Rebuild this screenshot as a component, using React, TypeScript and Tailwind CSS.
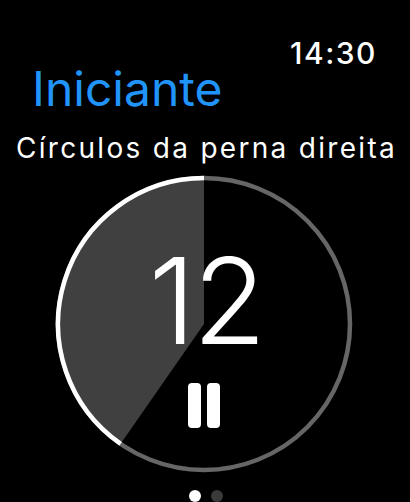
import React from "react";

const font = { fontFamily: "Inter, 'Noto Sans', sans-serif" };

function ProgressRing({ fraction }: { fraction: number }) {
  // angle measured counter-clockwise from 12 o'clock
  const r = 146;
  const a = fraction * 2 * Math.PI;
  const ex = 150 - r * Math.sin(a);
  const ey = 150 - r * Math.cos(a);
  const large = fraction > 0.5 ? 1 : 0;

  return (
    <svg width="300" height="300" viewBox="0 0 300 300" className="block">
      <path
        d={`M150 150 L150 ${150 - r} A${r} ${r} 0 ${large} 0 ${ex} ${ey} Z`}
        fill="#404040"
      />
      <circle cx="150" cy="150" r={r} fill="none" stroke="#666666" strokeWidth="4.5" />
      <path
        d={`M150 ${150 - r} A${r} ${r} 0 ${large} 0 ${ex} ${ey}`}
        fill="none"
        stroke="#ffffff"
        strokeWidth="4.5"
      />
    </svg>
  );
}

export default function App() {
  return (
    <div className="w-[410px] h-[502px] bg-black text-white overflow-hidden flex flex-col" style={font}>
      {/* Clock */}
      <div className="pt-[38px] pr-[33px] text-right text-[30px] leading-[30px] font-medium tracking-[1.5px]">14:30</div>

      {/* Title */}
      <div className="mt-[-3.5px] pl-[32px] text-[48px] leading-[48px] text-[#2094fa]">Iniciante</div>
      <div className="mt-[21.5px] pl-[16px] text-[28px] leading-[28px] tracking-[2.3px] whitespace-nowrap">
        Círculos da perna direita
      </div>

      {/* Timer */}
      <div className="relative mt-[12px] ml-[54px] w-[300px] h-[300px]">
        <ProgressRing fraction={0.4033} />
        <div className="absolute inset-0 flex flex-col items-center">
          <div className="mt-[66px] pl-[4px] text-[120px] leading-[122px] font-light tracking-tight">12</div>
          <div className="mt-[21px] flex gap-[6px]">
            <div className="w-[13px] h-[45px] rounded-[4px] bg-white" />
            <div className="w-[13px] h-[45px] rounded-[4px] bg-white" />
          </div>
        </div>
      </div>

      {/* Page dots */}
      <div className="mt-[15.7px] flex justify-center gap-[10px] pl-[2px]">
        <div className="w-[12px] h-[12px] rounded-full bg-white" />
        <div className="w-[12px] h-[12px] rounded-full bg-[#3a3a3a]" />
      </div>
    </div>
  );
}
